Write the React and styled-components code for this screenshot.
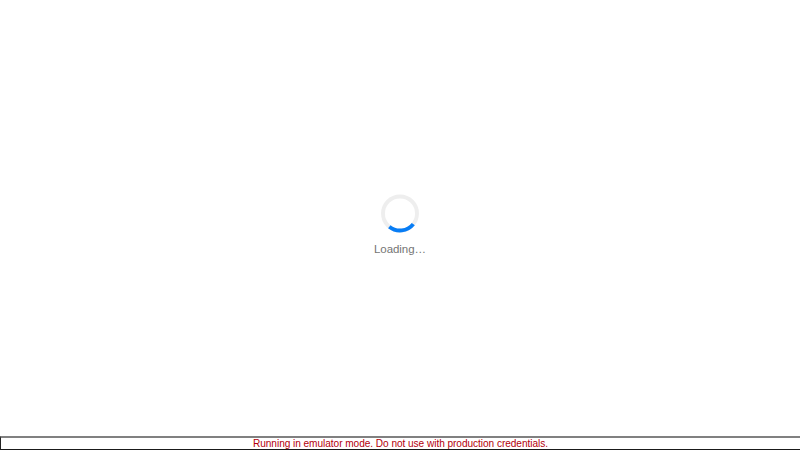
import React from "react";
import styled, { createGlobalStyle } from "styled-components";

const GlobalStyle = createGlobalStyle`
  * { box-sizing: border-box; }
  body {
    margin: 0;
    background: #fff;
    font-family: "Liberation Sans", Arial, sans-serif;
  }
`;

const Page = styled.div`
  display: flex;
  flex-direction: column;
  height: 100vh;
  overflow: hidden;
`;

const LoadingPanel = styled.main`
  flex: 1;
  display: flex;
  flex-direction: column;
  align-items: center;
  padding-top: 194px;
`;

const Spinner = styled.svg`
  display: block;
  width: 38px;
  height: 39px;
`;

const LoadingText = styled.p`
  margin: 9px 0 0;
  font-size: 11.5px;
  letter-spacing: -0.05px;
  line-height: 14px;
  color: #757575;
  white-space: nowrap;
`;

const EmulatorWarning = styled.footer`
  height: 14px;
  border-top: 2px solid #808080;
  border-left: 1px solid #222;
  border-bottom: 1px solid #1a1a1a;
  background: #fff;
  color: #b3000c;
  font-size: 10.1px;
  letter-spacing: -0.045px;
  line-height: 11px;
  text-align: center;
  white-space: nowrap;
`;

export default function App() {
  return (
    <Page>
      <GlobalStyle />
      <LoadingPanel>
        <Spinner viewBox="-19 -19.5 38 39" fill="none" strokeWidth="3.9">
          <circle r="17" stroke="#eeeeee" />
          <path d="M13.3 10.6A17 17 0 0 1 -10.7 13.2" stroke="#087df5" />
        </Spinner>
        <LoadingText>Loading…</LoadingText>
      </LoadingPanel>
      <EmulatorWarning>
        Running in emulator mode. Do not use with production credentials.
      </EmulatorWarning>
    </Page>
  );
}
